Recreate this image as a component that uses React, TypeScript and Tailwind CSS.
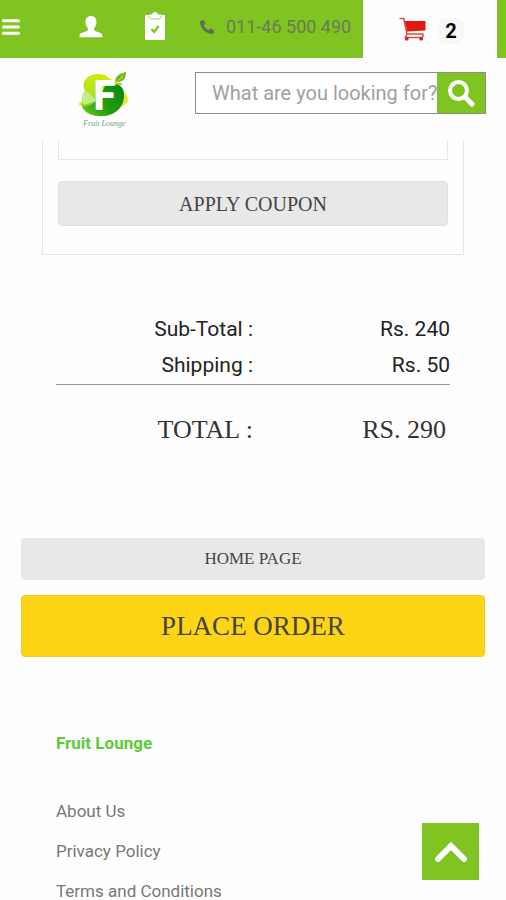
import { FaBars, FaPhoneAlt } from 'react-icons/fa';

const totals = [
  { label: 'Sub-Total :', value: 'Rs. 240' },
  { label: 'Shipping :', value: 'Rs. 50' },
];

const footerLinks = ['About Us', 'Privacy Policy', 'Terms and Conditions'];

function UserIcon() {
  return (
    <svg viewBox="0 0 24 22" className="w-6 h-[22px]" fill="currentColor" aria-hidden="true">
      <path d="M12 0C8.800 0 6.500 2.200 6.500 6c0 2.600 1 4.600 2.300 5.900v1.800c0 .6-.3.900-.9 1.200L2.600 17C1 17.700.5 18.700.5 20c0 .9.300 1.300 1.100 1.300h20.800c.8 0 1.100-.4 1.100-1.300 0-1.300-.5-2.300-2.100-3l-5.300-2.100c-.6-.3-.9-.6-.9-1.200v-1.800c1.300-1.300 2.300-3.300 2.300-5.900C17.500 2.200 15.200 0 12 0z" />
    </svg>
  );
}

function OrdersIcon() {
  return (
    <svg viewBox="0 0 22 30" className="w-[22px] h-[30px]" aria-hidden="true">
      <rect x="1" y="3" width="20" height="25" rx="1" fill="#fff" />
      <path d="M5 2.500h3C8.500.9 9.500 0 11 0s2.500.9 3 2.500h3v3l-2 2H7l-2-2z" fill="#fff" />
      <path d="M4.500 3.500c.3 2.300 1.300 3.500 3 3.500h7c1.700 0 2.700-1.200 3-3.500" fill="none" stroke="#a5d45f" strokeWidth="1" />
      <path d="M7.500 17l2.600 3 4.600-6" fill="none" stroke="#80c422" strokeWidth="2.200" />
    </svg>
  );
}

function CartIcon() {
  return (
    <svg viewBox="0 0 27 24" className="w-[27px] h-6" fill="none" aria-hidden="true">
      <path d="M5.500 4h21v9.500L8 14.500z" fill="#e0190f" />
      <path d="M.5 1.500h4.300L8 17" stroke="#d8504a" strokeWidth="1.600" />
      <path d="M23.800 20v-3H8l-1.500 3.500h17" stroke="#d8504a" strokeWidth="1.600" />
      <rect x="6" y="20" width="3.500" height="3.500" rx="1" fill="#d8241c" />
      <rect x="20.500" y="20" width="3.500" height="3.500" rx="1" fill="#d8241c" />
    </svg>
  );
}

function SearchIcon() {
  return (
    <svg viewBox="0 0 28 28" className="w-7 h-7" fill="none" stroke="currentColor" aria-hidden="true">
      <circle cx="11.500" cy="11.500" r="8.500" strokeWidth="4" />
      <path d="M18 18l7 7" strokeWidth="5" strokeLinecap="round" />
    </svg>
  );
}

function Logo() {
  return (
    <svg viewBox="0 0 52 56" className="w-[52px] h-14" role="img" aria-label="Fruit Lounge">
      <defs>
        <linearGradient id="body" x1="0.6" y1="0" x2="0.4" y2="1">
          <stop offset="0" stopColor="#d9ea00" />
          <stop offset="0.5" stopColor="#b4e01c" />
          <stop offset="1" stopColor="#6cc820" />
        </linearGradient>
        <linearGradient id="dark" x1="0" y1="0.8" x2="1" y2="0.3">
          <stop offset="0" stopColor="#62c41c" />
          <stop offset="0.5" stopColor="#229c10" />
          <stop offset="1" stopColor="#0b8a12" />
        </linearGradient>
      </defs>
      <circle cx="3" cy="32" r="2" fill="#e3ea2a" />
      <circle cx="43" cy="27" r="7" fill="#e9e92c" />
      <path d="M8 7C14 0 27 1 32 7c8 1 14 9 13 18-2 12-11 19-21 19C13 45 2 39 4 29c0-5 1-7 3-10-2-4-2-9 1-12z" fill="url(#body)" />
      <path d="M7 18c4 3 8 6 11 11L6 33C2 28 4 22 7 18z" fill="#c4ee84" />
      <path d="M27 14c9-4 18-2 19 7 1 13-7 21-19 23-10 1-19-3-23-9 10-1 16-5 23-21z" fill="url(#dark)" />
      <path d="M37 10C37 4 42 1 48 0c0 8-4 11-11 10z" fill="#75bd1e" />
      <path d="M36 12c3-2 6-5 9-8" fill="none" stroke="#c7e85a" strokeWidth="1" />
      <path d="M40 11l5 1-3 1z" fill="#e44a20" />
      <text x="16" y="37" fontSize="38" fontWeight="500" fill="#fff" stroke="#fff" strokeWidth="2" strokeLinejoin="round" className="font-['Roboto',sans-serif]">F</text>
      <text x="5" y="54" fontSize="8" fontStyle="italic" fill="#6aa878" className="font-['Liberation_Serif',serif]">Fruit Lounge</text>
    </svg>
  );
}

export default function App() {
  return (
    <div className="min-h-screen bg-[#fefefe] font-['Roboto',sans-serif] text-[#222]">
      <header>
        {/* Top bar */}
        <div className="flex h-[58px] items-center bg-[#80c422] pl-[2px] pr-[9px] text-white">
          <button aria-label="Menu" className="flex w-[77px] shrink-0 pb-1">
            <FaBars className="h-5 w-[18px]" />
          </button>
          <a href="#account" aria-label="My account" className="w-[65px] shrink-0 pb-1">
            <UserIcon />
          </a>
          <a href="#orders" aria-label="My orders" className="w-14 shrink-0 pb-1">
            <OrdersIcon />
          </a>
          <a href="tel:01146500490" className="flex min-w-0 flex-1 items-center gap-3 whitespace-nowrap pb-1 text-lg text-[#6a7a55]">
            <FaPhoneAlt className="h-[14px] w-[14px] text-[#5f6d4e]" />
            011-46 500 490
          </a>
          <a href="#cart" aria-label="Cart, 2 items" className="flex h-full w-[134px] shrink-0 items-center justify-center gap-3 bg-[#fefefe] pl-[3px]">
            <CartIcon />
            <span className="mt-[3px] flex h-[26px] w-[26px] items-center justify-center rounded-lg bg-[#f7f7f7] text-xl font-bold text-black">2</span>
          </a>
        </div>

        {/* Logo and search */}
        <div className="flex h-[83px] items-start pl-[78px] pr-5 pt-[14px]">
          <a href="#home" className="w-[117px] shrink-0">
            <Logo />
          </a>
          <form className="flex h-[42px] min-w-0 flex-1 border border-[#8c8c8c]" onSubmit={(e) => e.preventDefault()}>
            <input
              type="text"
              aria-label="Search"
              placeholder="What are you looking for?"
              className="min-w-0 flex-1 bg-white pl-4 text-xl outline-none placeholder:text-[#a0a0a0]"
            />
            <button aria-label="Submit search" className="flex w-12 shrink-0 items-center justify-center bg-[#80c422] text-white">
              <SearchIcon />
            </button>
          </form>
        </div>
      </header>

      <main>
        {/* Coupon */}
        <section className="mx-[42px] border border-t-0 border-[#e6e6e6] px-[15px] pb-7">
          <input type="text" aria-label="Coupon code" className="block h-[19px] w-full border border-t-0 border-[#e6e6e6] px-3 outline-none" />
          <button className="mt-[21px] h-[45px] w-full rounded-sm border border-[#e0e0e0] bg-[#e8e8e8] font-['Liberation_Serif',serif] text-xl text-[#444]">
            APPLY COUPON
          </button>
        </section>

        {/* Totals */}
        <table className="mx-14 mt-[57px] w-[calc(100%-112px)] border-collapse text-right text-[21px]">
          <tbody>
            {totals.map((row) => (
              <tr key={row.label} className="h-9">
                <th scope="row" className="w-1/2 p-0 font-normal">{row.label}</th>
                <td className="p-0">{row.value}</td>
              </tr>
            ))}
          </tbody>
          <tfoot>
            <tr className="h-[90px] border-t border-[#999] font-['Liberation_Serif',serif] text-[26px] text-[#333]">
              <th scope="row" className="p-0 font-normal">TOTAL :</th>
              <td className="p-0 pr-1">RS. 290</td>
            </tr>
          </tfoot>
        </table>

        {/* Actions */}
        <div className="mx-[21px] mt-16 flex flex-col gap-[15px] font-['Liberation_Serif',serif] text-[#444]">
          <button className="h-[42px] rounded-sm bg-[#e8e8e8] text-[17px]">HOME PAGE</button>
          <button className="h-[62px] rounded-sm border border-[#eccb26] bg-[#fdd515] text-[27px]">PLACE ORDER</button>
        </div>
      </main>

      <footer className="px-14 pt-[74px]">
        <h2 className="text-[17px] font-bold leading-6 text-[#5ccb35]">Fruit Lounge</h2>
        <ul className="mt-9 text-[17px] leading-10 text-[#777]">
          {footerLinks.map((link) => (
            <li key={link}>
              <a href="#footer">{link}</a>
            </li>
          ))}
        </ul>
      </footer>

      <button aria-label="Back to top" className="fixed bottom-5 right-[27px] flex h-[57px] w-[57px] items-center justify-center bg-[#80c422] text-white">
        <svg viewBox="0 0 34 24" className="h-6 w-[34px]" fill="none" stroke="currentColor" strokeWidth="6" strokeLinecap="round" aria-hidden="true">
          <path d="M4 19L17 6l13 13" />
        </svg>
      </button>
    </div>
  );
}
